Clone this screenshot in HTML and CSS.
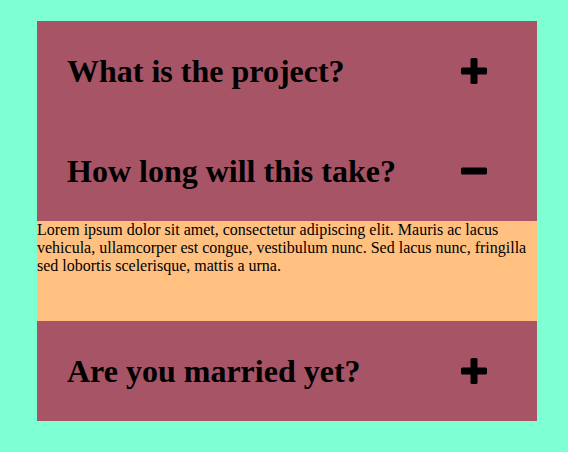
FILE: index.html
```html
<!DOCTYPE html>
<html>
<head>
<meta charset="utf-8">
<link rel="stylesheet" href="styles.css">
</head>
<body>
<div class="accordion">
  <div class="item">
    <div class="header">
      <h2 class="title">What is the project?</h2>
      <svg class="icon" width="26" height="26" viewBox="0 0 26 26"><rect x="9.5" y="0" width="7" height="26" rx="1.5" fill="#000"/><rect x="0" y="9.5" width="26" height="7" rx="1.5" fill="#000"/></svg>
    </div>
  </div>
  <div class="item">
    <div class="header">
      <h2 class="title">How long will this take?</h2>
      <svg class="icon" width="26" height="26" viewBox="0 0 26 26"><rect x="0" y="9.5" width="26" height="7" rx="1.5" fill="#000"/></svg>
    </div>
    <div class="panel">
      <p class="text">Lorem ipsum dolor sit amet, consectetur adipiscing elit. Mauris ac lacus vehicula, ullamcorper est congue, vestibulum nunc. Sed lacus nunc, fringilla sed lobortis scelerisque, mattis a urna.</p>
    </div>
  </div>
  <div class="item">
    <div class="header">
      <h2 class="title">Are you married yet?</h2>
      <svg class="icon" width="26" height="26" viewBox="0 0 26 26"><rect x="9.5" y="0" width="7" height="26" rx="1.5" fill="#000"/><rect x="0" y="9.5" width="26" height="7" rx="1.5" fill="#000"/></svg>
    </div>
  </div>
</div>
</body>
</html>
```
FILE: styles.css
```css
html, body {
  background: #7fffd4;
}
body {
  margin: 0;
  padding: 21px 0 0 37px;
  font-family: "Liberation Serif", "Times New Roman", serif;
}
.accordion {
  width: 500px;
  background: #a65466;
}
.header {
  height: 100px;
  display: flex;
  align-items: center;
  justify-content: space-between;
  padding: 0 50px 0 30px;
  box-sizing: border-box;
}
.title {
  margin: 0;
  font-size: 32px;
  font-weight: bold;
  color: #000;
}
.icon {
  display: block;
  flex: none;
}
.panel {
  height: 100px;
  background: #ffc080;
}
.text {
  margin: 0;
  font-size: 16px;
  color: #000;
}
```
